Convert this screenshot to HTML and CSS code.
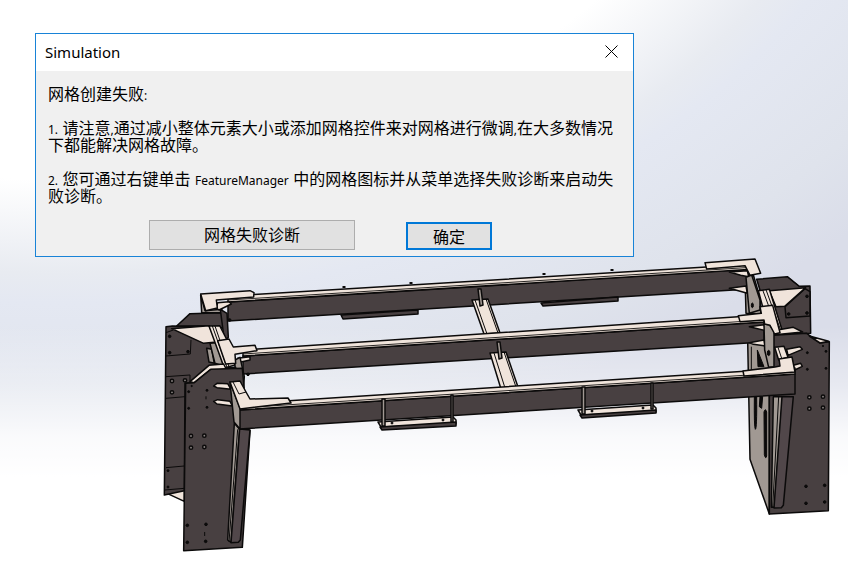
FILE: index.html
```html
<!DOCTYPE html>
<html lang="zh-CN">
<head>
    <meta charset="UTF-8">
    <meta name="viewport" content="width=device-width, initial-scale=1.0">
    <title>Simulation</title>
    <link rel="stylesheet" href="styles.css">
</head>
<body>
    <main class="viewport">
        <svg class="model" viewBox="0 0 848 582" aria-hidden="true">
            <!-- legs, left side -->
            <g transform="translate(155 280) scale(.33333)">
                <path class="cream" d="M36 640L88 628V664Z"/>
                <path class="dark" d="M33 140L52 138L190 140V300L90 310L88 632L28 645Z"/>
                <path class="line" d="M33 228L106 222L108 180M33 290L105 285V305M33 355L90 350M33 563L88 558M30 630L88 625M33 158L55 150"/>
                <path class="dark" d="M65 138L105 101L200 98L208 140L180 150L162 137Z"/>
                <path class="cream" d="M50 146L162 137L184 186L146 190Z"/>
                <path class="grey" d="M155 205L170 208L178 250L162 246Z"/>
                <path class="grey" d="M165 190L184 188L206 258L180 250Z"/>
                <path class="grey" d="M137 45L150 92L200 88L205 98H140Z"/>
                <path class="dark" d="M196 88L216 100L220 172L208 182Z"/>
                <circle class="hole" cx="44" cy="169" r="4"/>
                <circle class="hole" cx="44" cy="218" r="4"/>
                <circle class="hole" cx="99" cy="215" r="4"/>
                <circle class="bolt" cx="51" cy="303" r="5"/>
                <circle class="bolt" cx="90" cy="301" r="5"/>
                <circle class="bolt" cx="51" cy="337" r="5"/>
                <circle class="hole" cx="39" cy="572" r="3"/>
                <circle class="hole" cx="39" cy="621" r="3"/>
            </g>
            <!-- legs, right side -->
            <g transform="translate(640 250) scale(.33333)">
                <path class="dark" d="M350 88L442 80L478 109L510 108L512 250L400 252Z"/>
                <path class="line" d="M442 80L460 95L478 109"/>
                <path class="dark" d="M435 170L495 116L510 125V198L438 203Z"/>
                <path class="cream" d="M388 122L497 113L434 169L408 170Z"/>
                <circle class="hole" cx="501" cy="139" r="4"/>
                <circle class="hole" cx="501" cy="189" r="4"/>
                <circle class="hole" cx="446" cy="192" r="4"/>
                <path class="grey" d="M315 80L340 75L362 150V192L318 190Z"/>
                <path class="grey" d="M323 270L400 265L388 440V792L330 628Z"/>
                <path class="dark" d="M400 256L500 250L540 279L568 275L565 782L388 792V440Z"/>
            </g>
            <!-- rear beam -->
            <path class="dark" d="M228 302L750 269V289L228 321Z"/>
            <path class="cream" d="M228 296L756 264V269L228 302Z"/>
            <path class="edge" d="M228 300L756 267"/>
            <path class="dark" d="M341 315L418 310V314L343 319Z"/>
            <path class="dark" d="M541 303L618 297V301L543 306Z"/>
            <path class="thick" d="M344 286V288M411 282V284M544 273V275M612 269V271"/>
            <path class="cream" d="M472 300L488 299L500 333L484 334Z"/>
            <path class="line" d="M475 300L487 334M486 299L498 333"/>
            <path class="grey" d="M478 289H481L483 305L480 306Z"/>
            <!-- middle beam -->
            <path class="dark" d="M243 356L764 322V342L243 374Z"/>
            <path class="cream" d="M243 350L764 315V322L243 356Z"/>
            <path class="edge" d="M243 354L764 320"/>
            <path class="cream" d="M490 353L506 352L518 387L501 389Z"/>
            <path class="line" d="M494 353L505 388M504 352L516 387"/>
            <path class="grey" d="M497 342H500L502 358L499 359Z"/>
            <!-- joints, left side -->
            <g transform="translate(155 280) scale(.33333)">
                <path class="cream" d="M188 68L222 65L229 72L192 90L184 84Z"/>
                <path class="cream" d="M137 42L285 32L297 38L296 51L184 60L187 84L152 92Z"/>
                <path class="cream" d="M162 138L194 137L216 180L240 255L208 264Z"/>
                <path class="line" d="M172 138L216 262M180 138L222 260"/>
                <path class="cream" d="M248 235L285 230V240L258 246Z"/>
                <path class="grey" d="M240 240L255 232L268 290L264 340L240 290Z"/>
                <path class="cream" d="M188 182L222 177L235 201L300 196L306 212L240 223L242 250L212 252Z"/>
                <circle class="hole" cx="279" cy="283" r="4"/>
                <circle class="hole" cx="224" cy="120" r="4"/>
                <path class="cream" d="M105 305L162 256L206 252L212 264L242 262V270L165 270L118 308Z"/>
                <path class="dark" d="M92 310L118 308L167 268L262 265L268 330L240 420L285 452L262 802L86 812Z"/>
                <path class="grey" d="M238 430L254 448L228 787L218 780Z"/>
                <path class="wood" d="M254 447L285 450L256 780L250 787L228 788Z"/>
                <path class="line" d="M248 448L222 786"/>
                <path class="cream" d="M176 318L186 310L218 311L228 328L186 323Z"/>
                <path class="cream" d="M176 364L188 359L225 364L232 378L186 372Z"/>
                <circle class="hole" cx="101" cy="335" r="3"/>
                <circle class="hole" cx="101" cy="385" r="3"/>
                <circle class="hole" cx="156" cy="331" r="3"/>
                <circle class="hole" cx="156" cy="382" r="3"/>
                <circle class="hole" cx="110" cy="318" r="2"/>
                <path class="line" d="M153 349V358M149 756V768"/>
                <circle class="bolt" cx="108" cy="468" r="5"/>
                <circle class="bolt" cx="148" cy="467" r="5"/>
                <circle class="bolt" cx="108" cy="503" r="5"/>
                <circle class="bolt" cx="148" cy="501" r="5"/>
                <circle class="hole" cx="97" cy="736" r="4"/>
                <circle class="hole" cx="153" cy="733" r="4"/>
                <circle class="hole" cx="97" cy="787" r="4"/>
                <circle class="hole" cx="152" cy="784" r="4"/>
            </g>
            <!-- joints, right side -->
            <g transform="translate(640 250) scale(.33333)">
                <path class="cream" d="M268 66L322 62L326 80L302 76Z"/>
                <path class="cream" d="M268 115L318 108L322 130Z"/>
                <path class="grey" d="M318 82L335 75L360 150V180L328 190Z"/>
                <ellipse class="slot" cx="337" cy="166" rx="3" ry="7"/>
                <path class="cream" d="M195 38L345 27L362 70L330 76L315 47L200 57Z"/>
                <path class="cream" d="M355 122L388 118L428 246L412 249L398 190L368 170Z"/>
                <path class="line" d="M368 120L416 248M378 119L424 246"/>
                <path class="cream" d="M328 230L372 224L378 242Z"/>
                <path class="cream" d="M328 278L372 270L376 288L340 283Z"/>
                <path class="cream" d="M412 240L460 232L488 246L405 254Z"/>
                <path class="cream" d="M508 258L566 274L540 279Z"/>
                <path class="slot" d="M352 300L372 350H354Z"/>
                <path class="line" d="M334 290V360"/>
                <path class="slot" d="M343 440Q342 532 346 538Q351 538 350 440ZM360 440L358 470L365 475L368 440Z"/>
                <path class="slot" d="M372 486Q376 472 380 486V618Q377 630 373 614Z"/>
                <path class="grey" d="M372 222L388 224L402 242V350L386 352L374 300Z"/>
                <ellipse class="slot" cx="386" cy="309" rx="4" ry="8"/>
                <path class="cream" d="M295 197L364 190L360 170L398 166L420 248L404 252L390 226L374 222L372 210L300 215Z"/>
                <path class="grey" d="M400 440H428L403 772H394Z"/>
                <path class="wood" d="M426 440H460L430 766L424 773L402 774Z"/>
                <path class="line" d="M416 440L398 772"/>
                <path class="cream" d="M440 298L480 290L487 298L444 316Z"/>
                <path class="cream" d="M460 346L482 340L487 349L464 360Z"/>
                <path class="cream" d="M404 292L432 289L444 322L416 330Z"/>
                <path class="line" d="M414 292L426 328"/>
                <circle class="hole" cx="502" cy="308" r="3"/>
                <circle class="hole" cx="502" cy="358" r="3"/>
                <circle class="hole" cx="558" cy="304" r="3"/>
                <circle class="hole" cx="558" cy="355" r="3"/>
                <circle class="hole" cx="549" cy="288" r="2"/>
                <circle class="bolt" cx="508" cy="442" r="5"/>
                <circle class="bolt" cx="549" cy="440" r="5"/>
                <circle class="bolt" cx="508" cy="476" r="5"/>
                <circle class="bolt" cx="549" cy="473" r="5"/>
                <circle class="hole" cx="498" cy="709" r="4"/>
                <circle class="hole" cx="554" cy="706" r="4"/>
                <circle class="hole" cx="498" cy="760" r="4"/>
                <circle class="hole" cx="554" cy="756" r="4"/>
            </g>
            <!-- front beam with its two brackets -->
            <path class="dark" d="M239 410L795 374V394L239 429Z"/>
            <path class="cream" d="M239 404L795 368V374L239 410Z"/>
            <path class="edge" d="M239 408L795 372"/>
            <path class="grey" d="M230 382L240 408V429L234 422Z"/>
            <path class="cream" d="M378 422L453 417L456 420V424L381 427Z"/>
            <path class="dark" d="M380 427L456 422V426L382 430Z"/>
            <path class="grey" d="M382 399H385V426H382ZM451 395H453V422H451Z"/>
            <circle class="hole" cx="392" cy="423" r="1"/>
            <circle class="hole" cx="443" cy="420" r="1"/>
            <path class="cream" d="M578 410L653 405L656 408V412L581 415Z"/>
            <path class="dark" d="M580 415L656 410V413L582 418Z"/>
            <path class="grey" d="M582 387H585V414H582ZM651 383H653V409H651Z"/>
            <circle class="hole" cx="592" cy="411" r="1"/>
            <circle class="hole" cx="643" cy="408" r="1"/>
            <path class="cream" d="M230 382L240 381L246 392L250 399L288 398L291 403L240 409Z"/>
            <path class="line" d="M233 382L239 394L246 392"/>
            <path class="cream" d="M743 371L775 367L780 366L779 359L792 357L795 372L744 376Z"/>
        </svg>

        <section class="dialog" role="dialog" aria-labelledby="dialog-title">
            <header class="title-bar">
                <h1 class="title" id="dialog-title">Simulation</h1>
                <button class="close" type="button" aria-label="关闭">
                    <svg class="close-icon" viewBox="0 0 13 13"><path d="M.5 .5L12.5 12.5M12.5 .5L.5 12.5"/></svg>
                </button>
            </header>
            <div class="message">
                <p>网格创建失败<span class="latin">:</span></p>
                <p><span class="latin">1.</span> 请注意<span class="latin">,</span>通过减小整体元素大小或添加网格控件来对网格进行微调<span class="latin">,</span>在大多数情况下都能解决网格故障。</p>
                <p><span class="latin">2.</span> 您可通过右键单击 <span class="latin">FeatureManager</span> 中的网格图标并从菜单选择失败诊断来启动失败诊断。</p>
            </div>
            <div class="actions">
                <button class="button diagnose" type="button">网格失败诊断</button>
                <button class="button ok" type="button">确定</button>
            </div>
        </section>
    </main>
</body>
</html>
```
FILE: styles.css
```css
* {
    box-sizing: border-box;
}

body {
    margin: 0;
    font-family: "Liberation Sans", "Noto Sans CJK SC", sans-serif;
    font-size: 16px;
    color: #000;
}

.viewport {
    display: grid;
    align-items: start;
    min-height: 100vh;
    overflow: hidden;
    background-image:
        linear-gradient(to bottom, rgba(255, 255, 255, 0) 56%, rgba(255, 255, 255, 0.35) 66%, rgba(255, 255, 255, 0.85) 75%, #fff 82%),
        radial-gradient(ellipse 99% 101% at 7% -52%, #fff 82%, #e8ebf1 98%, #e4e8f2 103%, #dfe3ec 120%, #dadde9 131%);
}

.model,
.dialog {
    grid-area: 1 / 1;
}

.model {
    width: 100%;
    height: auto;
}

.model path,
.model circle,
.model ellipse {
    stroke: #0b0a0a;
    stroke-width: 1.5px;
    stroke-linejoin: round;
    vector-effect: non-scaling-stroke;
}

.model .dark {
    fill: #484041;
}

.model .wood {
    fill: #51474a;
}

.model .cream {
    fill: #f0e4db;
}

.model .grey {
    fill: #a19993;
}

.model .line {
    fill: none;
    stroke-width: 1px;
}

.model .edge {
    fill: none;
    stroke: #2a2725;
    stroke-width: 1px;
}

.model .thick {
    fill: none;
    stroke-width: 3px;
}

.model .hole,
.model .slot {
    fill: #0b0a0a;
    stroke-width: 1px;
}

.model .bolt {
    fill: #8b8583;
}

.dialog {
    width: 599px;
    max-width: calc(100% - 70px);
    margin: 33px 35px;
    border: 1px solid #1883d7;
    background-color: #f0f0f0;
}

.title-bar {
    display: flex;
    justify-content: space-between;
    align-items: center;
    height: 37px;
    padding: 0 0 2px 9px;
    background-color: #fff;
}

.title {
    margin: 0;
    font-family: "Noto Sans", sans-serif;
    font-size: 15px;
    font-weight: normal;
}

.close {
    display: flex;
    justify-content: center;
    align-items: center;
    width: 43px;
    height: 35px;
    padding: 0;
    border: none;
    background: none;
}

.close-icon {
    width: 13px;
    height: 13px;
    fill: none;
    stroke: #000;
}

.message {
    padding: 15px 14px 0 12px;
    line-height: 17px;
}

.message p {
    margin: 0 0 17px;
}

.message p:last-child {
    margin-bottom: 15px;
}

.latin {
    font-family: "Noto Sans", sans-serif;
    font-size: 12px;
    line-height: 1;
}

.actions {
    display: flex;
    justify-content: center;
    align-items: flex-end;
    gap: 51px;
    padding: 0 28px 6px 0;
}

.button {
    height: 30px;
    padding: 0 0 3px;
    border: 1px solid #adadad;
    background-color: #e1e1e1;
    font: inherit;
    color: inherit;
}

.diagnose {
    width: 206px;
}

.ok {
    width: 86px;
    height: 28px;
    border: 2px solid #0078d7;
}
```
